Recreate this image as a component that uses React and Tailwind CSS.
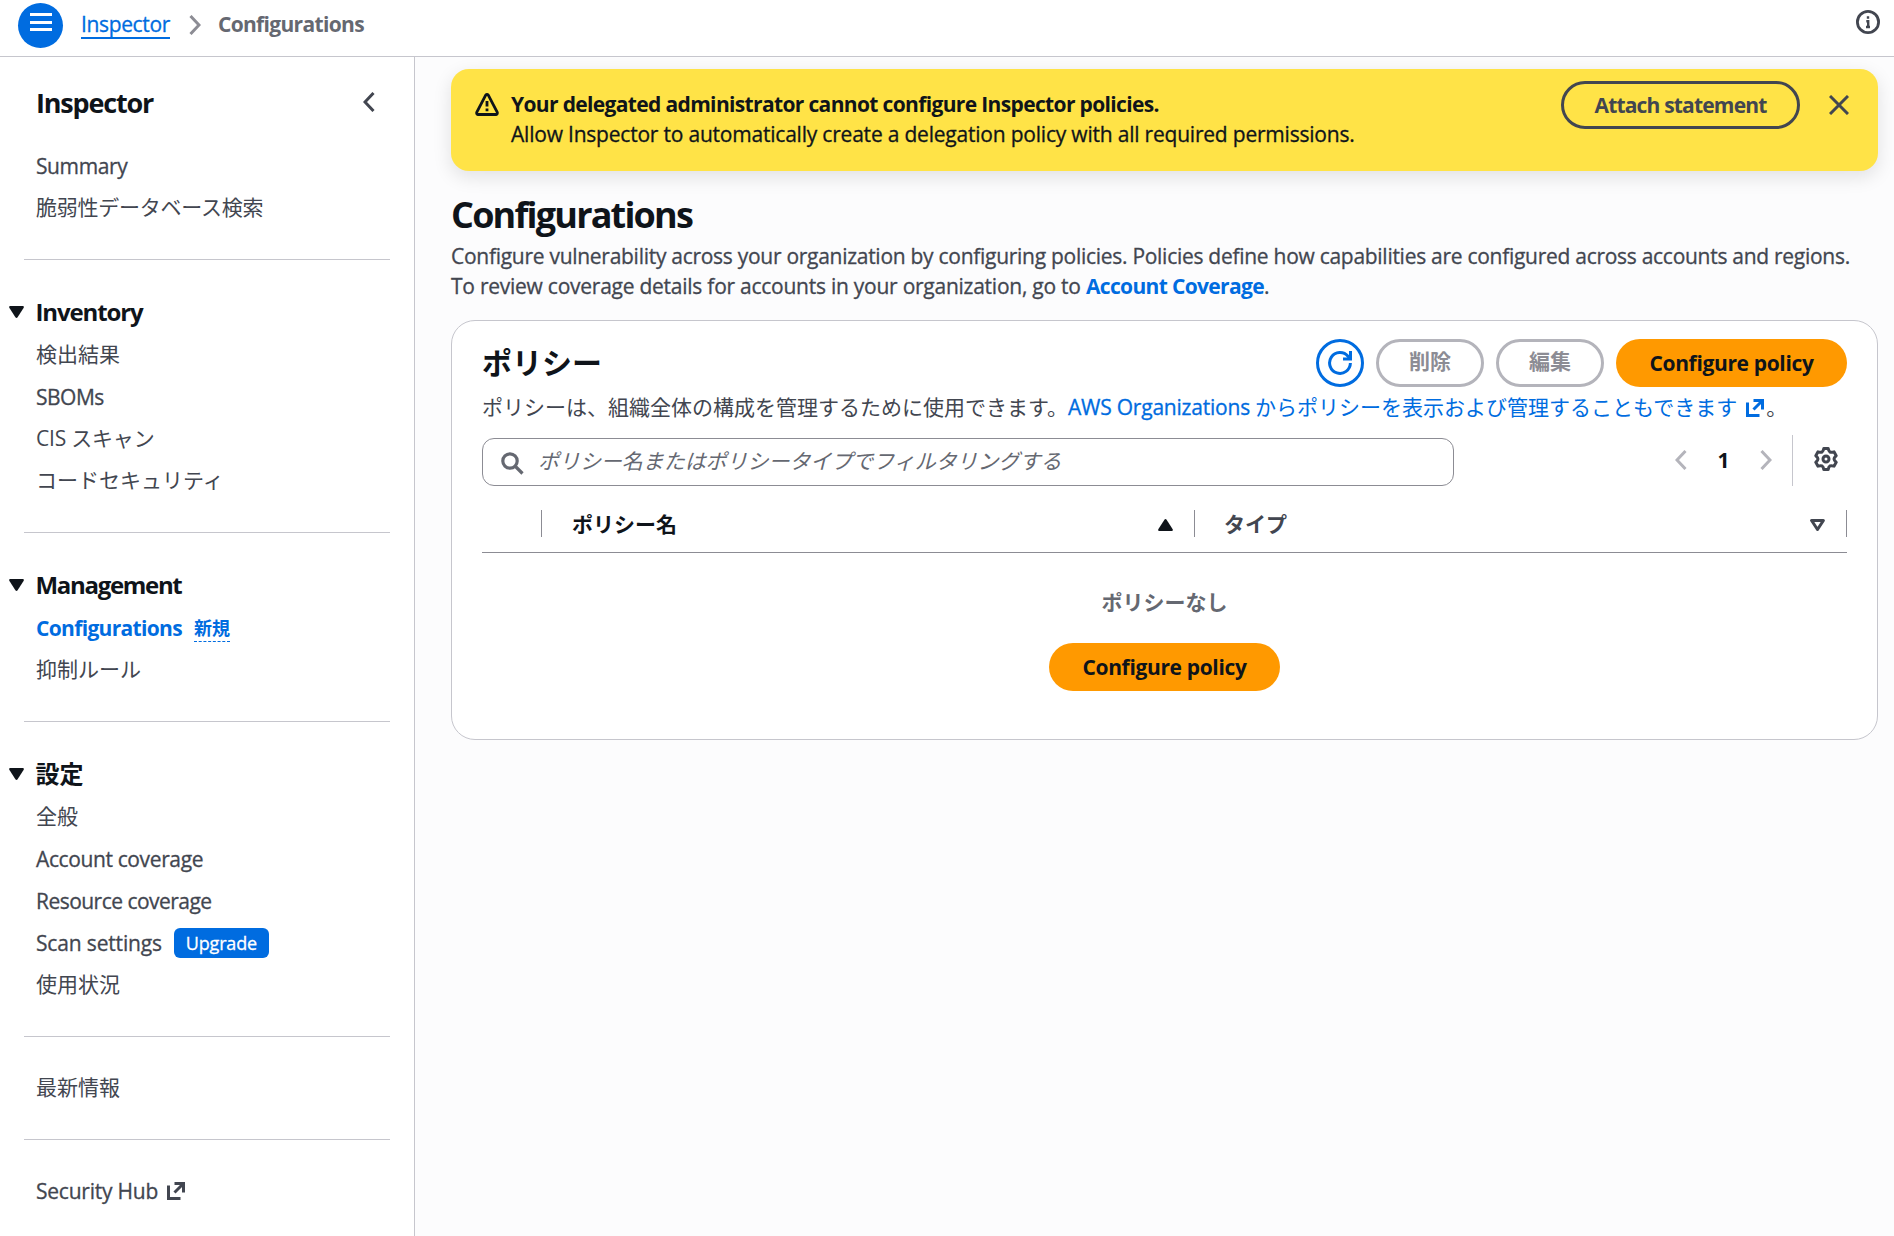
const NAV = [
  {
    items: [
      { label: "Summary", tracking: "tracking-[-0.4px] [-webkit-text-stroke:0.3px]" },
      { label: "脆弱性データベース検索", tracking: "tracking-[-0.25px] pb-0.5" },
    ],
  },
  {
    title: "Inventory",
    tracking: "tracking-[-1.13px]",
    items: [
      { label: "検出結果", tracking: "pb-0.5" },
      { label: "SBOMs", tracking: "tracking-[-0.5px] [-webkit-text-stroke:0.3px]" },
      { label: "CIS スキャン", tracking: "tracking-[-0.2px] pb-0.5" },
      { label: "コードセキュリティ", tracking: "pb-0.5" },
    ],
  },
  {
    title: "Management",
    tracking: "tracking-[-1.31px]",
    items: [
      { label: "Configurations", active: true, tracking: "tracking-[-0.67px]", isNew: true },
      { label: "抑制ルール", tracking: "pb-0.5" },
    ],
  },
  {
    title: "設定",
    items: [
      { label: "全般", tracking: "pb-0.5" },
      { label: "Account coverage", tracking: "tracking-[-0.38px] [-webkit-text-stroke:0.3px]" },
      { label: "Resource coverage", tracking: "tracking-[-0.53px] [-webkit-text-stroke:0.3px]" },
      { label: "Scan settings", tracking: "tracking-[-0.16px] [-webkit-text-stroke:0.3px]", badge: "Upgrade" },
      { label: "使用状況", tracking: "pb-0.5" },
    ],
  },
  { items: [{ label: "最新情報", tracking: "pb-0.5" }] },
  { items: [{ label: "Security Hub", tracking: "tracking-[-0.23px] [-webkit-text-stroke:0.3px]", external: true }] },
];

const ExternalIcon = ({ className = "" }) => (
  <svg viewBox="0 0 18 18" className={`w-[18px] h-[18px] shrink-0 ${className}`} fill="none" stroke="currentColor" strokeWidth="3">
    <path d="M1.5 3.5v13h12M7.5 1.5h9v9M7.5 10.5l8-8" />
  </svg>
);

const Chevron = ({ left, className = "" }) => (
  <svg viewBox="0 0 12 20" className={className} fill="none" stroke="currentColor" strokeWidth="3">
    <path d={left ? "M10.5 1L2 10l8.5 9" : "M1.5 1L10 10l-8.5 9"} />
  </svg>
);

const PrimaryButton = () => (
  <button className="h-12 w-[231px] rounded-full bg-[#ff9900] text-[#0f141a] font-bold tracking-[-0.35px]">Configure policy</button>
);

const DisabledButton = ({ children }) => (
  <button disabled className="h-12 w-[108px] pb-1 rounded-full border-3 border-[#b4b4bb] text-[#8c8c94] font-bold leading-none">{children}</button>
);

const Header = () => (
  <header className="h-[57px] bg-white border-b border-[#c6c6cd] flex items-start pl-[18px] pr-[14px]">
    <button className="mt-[3px] w-[45px] h-[45px] rounded-full bg-[#006ce0] flex flex-col items-center pt-[10px] gap-[4.5px]">
      <span className="w-[22px] h-[3px] bg-white" />
      <span className="w-[22px] h-[3px] bg-white" />
      <span className="w-[22px] h-[3px] bg-white" />
    </button>
    <a className="ml-[18px] mt-[9px] h-[30px] text-[#006ce0] tracking-[-0.36px] border-b-2 border-[#006ce0] [-webkit-text-stroke:0.3px]">Inspector</a>
    <Chevron className="w-3 h-5 ml-[19px] mt-[15px] text-[#8c8c94]" />
    <span className="ml-[17px] mt-[9px] font-bold text-[#656871] tracking-[-0.67px]">Configurations</span>
    <svg viewBox="0 0 24 24" className="w-6 h-6 ml-auto mt-[10px] text-[#424650]" fill="none" stroke="currentColor">
      <circle cx="12" cy="12" r="10.6" strokeWidth="2.8" />
      <path d="M12 6.2v2.6M10.3 11.2h1.9v6M10 17h4" strokeWidth="2.4" />
    </svg>
  </header>
);

const NavItem = ({ item }) => (
  <li className="h-[42px] pl-9 pb-px flex items-center">
    <a className={`${item.tracking} ${item.active ? "font-bold text-[#006ce0]" : "text-[#424650]"}`}>{item.label}</a>
    {item.isNew && (
      <span className="ml-3 mt-0.5 h-[26px] text-lg leading-6 font-bold text-[#006ce0] border-b border-dashed border-[#006ce0]">新規</span>
    )}
    {item.badge && (
      <span className="ml-3 mt-px h-[30px] w-[95px] rounded-md bg-[#006ce0] text-white text-lg leading-[31px] text-center tracking-[-0.2px] [-webkit-text-stroke:0.3px]">{item.badge}</span>
    )}
    {item.external && <ExternalIcon className="ml-[9px] mt-px text-[#424650]" />}
  </li>
);

const Sidebar = () => (
  <nav className="w-[415px] shrink-0 bg-white border-r border-[#c6c6cd]">
    <div className="flex items-center justify-between pl-9 pr-[39px] pt-6 h-[68px]">
      <h2 className="text-[27px] font-bold text-[#0f141a] tracking-[-1.19px]">Inspector</h2>
      <Chevron left className="w-3 h-5 mb-0.5 text-[#424650]" />
    </div>
    <div className="pt-5">
      {NAV.map((section, i) => (
        <section key={i}>
          {i > 0 && <hr className="mx-6 border-[#c6c6cd] mb-[30px]" />}
          {section.title && (
            <div className="mt-8 h-[42px] pb-0.5 flex items-center">
              <svg viewBox="0 0 15 12" className="w-[15px] h-3 ml-[8.5px] mr-3 text-[#0f141a]" fill="currentColor">
                <path d="M1.2 0h12.6q1.5.2.9 1.8L8.600 11.200q-1.100 1.400-2.200 0L.3 1.800Q-.3.2 1.200 0z" />
              </svg>
              <h3 className={`text-2xl font-bold text-[#0f141a] ${section.tracking || ""}`}>{section.title}</h3>
            </div>
          )}
          <ul className="mb-[30px]">
            {section.items.map((item) => <NavItem key={item.label} item={item} />)}
          </ul>
        </section>
      ))}
    </div>
  </nav>
);

const Banner = () => (
  <div className="h-[102px] rounded-[18px] bg-[#ffe347] flex items-start pl-6 pr-[29px] shadow-[0_6px_18px_1px_rgba(0,7,22,0.10)]">
    <svg viewBox="0 0 24 23" className="w-6 h-[23px] mt-6 text-[#0f141a]" fill="none" stroke="currentColor" strokeWidth="2.8">
      <path d="M10.7 2.2q1.3-1.6 2.6 0l9 17.2q.4 1.9-1.2 2.1H2.9q-1.6-.2-1.2-2.1z" strokeLinejoin="round" />
      <path d="M12 8v5.400M12 15.400v2.800" />
    </svg>
    <div className="ml-3 mt-5 text-[#0f141a]">
      <p className="font-bold tracking-[-0.65px]">Your delegated administrator cannot configure Inspector policies.</p>
      <p className="tracking-[-0.21px] [-webkit-text-stroke:0.3px]">Allow Inspector to automatically create a delegation policy with all required permissions.</p>
    </div>
    <button className="ml-auto mt-3 h-12 w-[239px] rounded-full border-3 border-[#424650] text-[#424650] font-bold tracking-[-0.82px]">Attach statement</button>
    <svg viewBox="0 0 20 20" className="w-5 h-5 ml-[29px] mt-[26px] text-[#424650]" fill="none" stroke="currentColor" strokeWidth="3">
      <path d="M1 1l18 18M19 1L1 19" />
    </svg>
  </div>
);

const PolicyTable = () => (
  <section className="mt-[19px] h-[420px] rounded-3xl border border-[#c6c6cd] bg-white px-[30px] pt-[18px]">
    <div className="flex items-center h-12 gap-3">
      <h2 className="text-[30px] font-bold text-[#0f141a] mr-auto leading-9">ポリシー</h2>
      <button className="w-12 h-12 rounded-full border-3 border-[#006ce0] text-[#006ce0] flex items-center justify-center">
        <svg viewBox="0 0 24 24" className="w-6 h-6" fill="none" stroke="currentColor" strokeWidth="3">
          <path d="M22.4 12.100A10.400 10.400 0 1 1 20 5.300l2 2.400" />
          <path d="M22.500 0v8h-7.500" />
        </svg>
      </button>
      <DisabledButton>削除</DisabledButton>
      <DisabledButton>編集</DisabledButton>
      <PrimaryButton />
    </div>
    <p className="mt-[5px] text-[#424650] flex items-center">
      <span>ポリシーは、組織全体の構成を管理するために使用できます。</span>
      <a className="text-[#006ce0] flex items-center">
        <span className="tracking-[-0.21px] mr-[5px] [-webkit-text-stroke:0.3px]">AWS Organizations</span>
        <span>からポリシーを表示および管理することもできます</span>
        <ExternalIcon className="ml-[9px] mr-0.5 mt-0.5" />
      </a>
      <span>。</span>
    </p>
    <div className="mt-[13px] h-[51px] flex items-center">
      <div className="w-[972px] h-12 mt-[3px] rounded-xl border border-[#8c8c94] flex items-center pl-[18px]">
        <svg viewBox="0 0 23 23" className="w-[23px] h-[23px] mt-0.5 text-[#656871]" fill="none" stroke="currentColor" strokeWidth="3.2">
          <circle cx="9" cy="9" r="7.2" />
          <path d="M14 14l7.500 7.500" />
        </svg>
        <span className="ml-[14px] mb-0.5 italic text-[#656871] tracking-[-0.05px]">ポリシー名またはポリシータイプでフィルタリングする</span>
      </div>
      <Chevron left className="w-3 h-5 ml-auto -mt-px text-[#b4b4bb]" />
      <span className="w-[73px] -mt-px text-center font-bold text-[#0f141a]">1</span>
      <Chevron className="w-3 h-5 -mt-px text-[#b4b4bb]" />
      <div className="h-[51px] w-px bg-[#c6c6cd] ml-5" />
      <svg viewBox="0 0 24 24" className="w-6 h-6 ml-[21px] mr-[9px] -mt-[3px] text-[#424650]" fill="none" stroke="currentColor" strokeWidth="3" strokeLinejoin="round">
        <path d="M9.800 1.500H14.200Q14.600 4 16 5.100Q17.500 5.600 20 4.850L22.200 8.650Q20 10.800 20 12Q20 13.200 22.200 15.350L20 19.150Q17.500 18.400 16 18.900Q14.600 20 14.200 22.500H9.800Q9.400 20 8 18.900Q6.500 18.400 4 19.150L1.800 15.350Q4 13.200 4 12Q4 10.800 1.800 8.650L4 4.850Q6.500 5.600 8 5.100Q9.400 4 9.800 1.500z" />
        <circle cx="12" cy="12" r="3" />
      </svg>
    </div>
    <div className="mt-[10px] h-[57px] border-b border-[#8c8c94] flex items-center pb-px font-bold">
      <div className="w-[60px] h-[27px] border-r border-[#8c8c94]" />
      <div className="w-[653px] h-[27px] border-r border-[#8c8c94] flex items-center pl-[30px] pr-[21px] justify-between text-[#0f141a]">
        <span>ポリシー名</span>
        <svg viewBox="0 0 15 12" className="w-[15px] h-3 mt-0.5" fill="currentColor">
          <path d="M1.200 12h12.600q1.500-.2.900-1.800L8.600.8q-1.100-1.400-2.200 0L.3 10.200Q-.3 11.800 1.200 12z" />
        </svg>
      </div>
      <div className="flex-1 h-[27px] border-r border-[#8c8c94] flex items-center pl-[29px] pr-[21px] justify-between text-[#424650]">
        <span>タイプ</span>
        <svg viewBox="0 0 15 12" className="w-[15px] h-3 mt-0.5" fill="none" stroke="currentColor" strokeWidth="3" strokeLinejoin="round">
          <path d="M1.600 1.500h11.800L7.500 10.500z" />
        </svg>
      </div>
    </div>
    <div className="flex flex-col items-center pt-[34px]">
      <p className="font-bold text-[#656871] mb-[26px]">ポリシーなし</p>
      <PrimaryButton />
    </div>
  </section>
);

export default function App() {
  return (
    <div lang="ja" className="h-[1236px] overflow-hidden flex flex-col bg-[#fcfcfd] font-['Open_Sans','Noto_Sans_CJK_JP',sans-serif] text-[21px] leading-[30px] whitespace-nowrap">
      <Header />
      <div className="flex flex-1 min-h-0">
        <Sidebar />
        <main className="flex-1 min-w-0 pt-3 pl-9 pr-4">
          <Banner />
          <h1 className="mt-[21px] text-4xl leading-[45px] font-bold text-[#0f141a] tracking-[-1.81px]">Configurations</h1>
          <div className="mt-1 text-[#424650]">
            <p className="tracking-[-0.28px] [-webkit-text-stroke:0.3px]">Configure vulnerability across your organization by configuring policies. Policies define how capabilities are configured across accounts and regions.</p>
            <p className="tracking-[-0.25px] [-webkit-text-stroke:0.3px]">
              To review coverage details for accounts in your organization, go to{" "}
              <a className="font-bold text-[#006ce0] tracking-[-0.65px] [-webkit-text-stroke:0]">Account Coverage</a>.
            </p>
          </div>
          <PolicyTable />
        </main>
      </div>
    </div>
  );
}
